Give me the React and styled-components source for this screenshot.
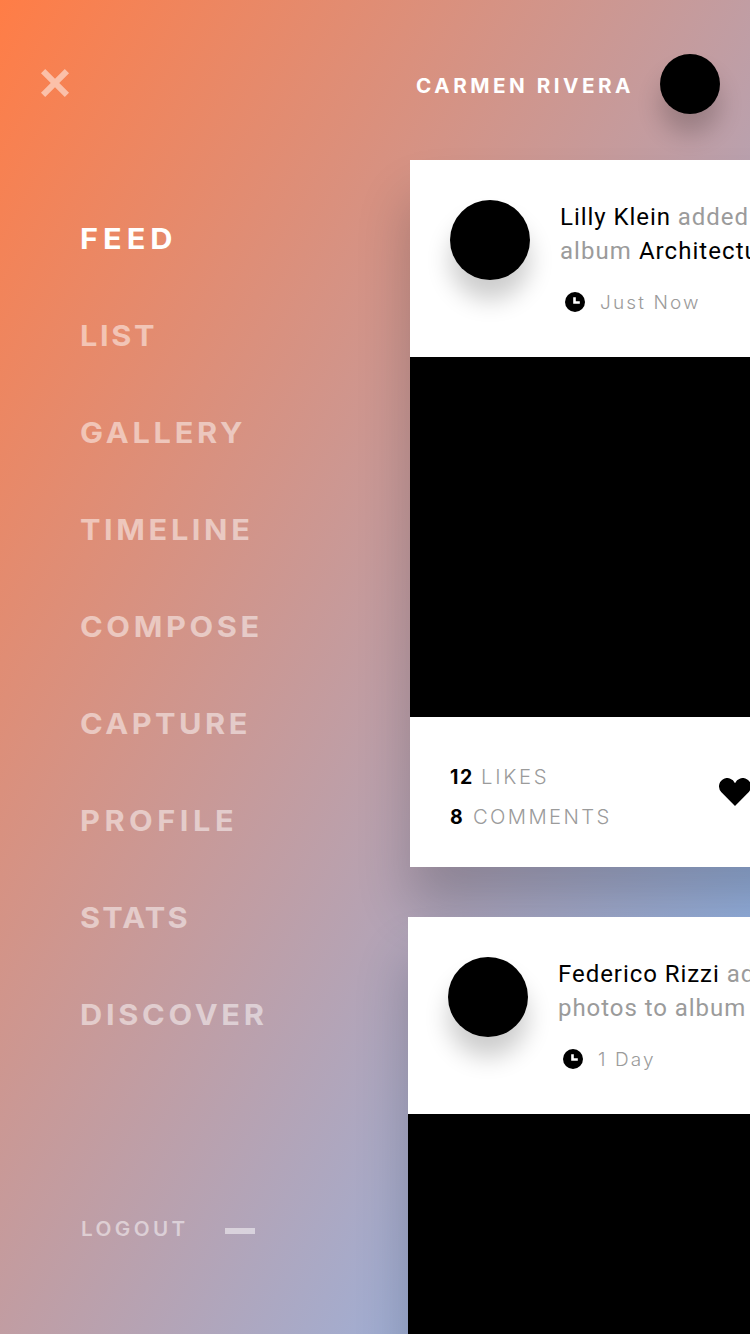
import React from 'react';
import styled, { createGlobalStyle } from 'styled-components';

const GlobalStyle = createGlobalStyle`
  *, *::before, *::after { box-sizing: border-box; }
  body { margin: 0; }
`;

const Screen = styled.div`
  width: 750px;
  height: 1334px;
  overflow: hidden;
  display: grid;
  grid-template: 160px 1174px / 408px 342px;
  background: linear-gradient(to bottom right, #ff7d46, #83bdff);
  font-family: Inter, 'Liberation Sans', sans-serif;
  color: #000;
`;

const TopBar = styled.header`
  grid-column: 1 / -1;
  display: flex;
  justify-content: space-between;
  align-items: flex-start;
  padding: 54px 30px 0 40px;
`;

const CloseButton = styled.button`
  display: block;
  margin-top: 14px;
  padding: 0;
  border: 0;
  background: none;
  line-height: 0;
`;

const User = styled.div`
  width: 304px;
  display: flex;
  align-items: center;
  justify-content: space-between;
`;

/* Wide, tracked capitals used by the navigation and the account name */
const WideText = styled.span`
  display: inline-block;
  white-space: nowrap;
  transform: scaleX(${(p) => p.$stretch || 1.06});
  transform-origin: left center;
  letter-spacing: ${(p) => p.$tracking}px;
`;

const UserName = styled(WideText)`
  margin-top: 4px;
  font-size: 19.5px;
  font-weight: 700;
  line-height: 24px;
  color: #fff;
`;

const Avatar = styled.div`
  flex: none;
  width: ${(p) => p.$size}px;
  height: ${(p) => p.$size}px;
  border-radius: 50%;
  background: #000;
  box-shadow: 0 20px 25px rgba(0, 0, 0, 0.2);
`;

const Sidebar = styled.aside`
  padding: 30px 0 0 80px;
`;

const Menu = styled.nav`
  display: flex;
  flex-direction: column;
`;

const MenuItem = styled.a`
  height: 97px;
  line-height: 97px;
  font-size: 29px;
  font-weight: 700;
  color: ${(p) => (p.$active ? '#fff' : 'rgba(255, 255, 255, 0.5)')};
`;

const Logout = styled.a`
  display: flex;
  align-items: center;
  width: 174px;
  height: 20px;
  margin: 156px 0 0 1px;
  justify-content: space-between;
  font-size: 19.5px;
  font-weight: 600;
  line-height: 20px;
  color: rgba(255, 255, 255, 0.5);
`;

const Dash = styled.i`
  width: 30px;
  height: 6px;
  margin-top: 4px;
  background: currentColor;
`;

const Feed = styled.main`
  display: flex;
  flex-direction: column;
  gap: 50px;
`;

const Card = styled.article`
  flex: none;
  width: 650px;
  margin-left: ${(p) => p.$inset || 0}px;
  background: #fff;
  box-shadow: 0 40px 50px rgba(0, 0, 0, 0.2);
`;

const CardHead = styled.div`
  display: flex;
  gap: 30px;
  height: 197px;
  padding: 40px 0 0 40px;
`;

const Line = styled.p`
  margin: 0;
  font: 400 24px/34px Roboto, 'Liberation Sans', sans-serif;
  letter-spacing: ${(p) => p.$tracking || 0.95}px;
  color: #9b9b9b;
  white-space: nowrap;

  b { font-weight: 400; color: #000; }
`;

const Time = styled.div`
  display: flex;
  align-items: center;
  gap: 14.5px;
  height: 20px;
  margin: 24px 0 0 5px;
  font-size: 18.3px;
  font-weight: 300;
  line-height: 20px;
  color: #9b9b9b;
`;

const Photo = styled.div`
  height: 360px;
  background: #000;
`;

const CardFoot = styled.div`
  display: flex;
  align-items: center;
  height: 150px;
  padding-left: 40px;
`;

const Stats = styled.div`
  width: 269px;
  padding-top: 10px;
`;

const Stat = styled.div`
  display: flex;
  height: 40px;
  line-height: 40px;
  font-size: 19.5px;
  font-weight: 300;
  color: #9b9b9b;
`;

const Count = styled.b`
  width: ${(p) => p.$width}px;
  font-weight: 700;
  letter-spacing: 1.5px;
  color: #000;
`;

const CloseIcon = () => (
  <svg width="30" height="30" viewBox="0 0 30 30">
    <path d="M3.1 3.1 26.9 26.9M26.9 3.1 3.1 26.9" stroke="#fff" strokeWidth="6" opacity="0.5" />
  </svg>
);

const ClockIcon = () => (
  <svg width="20" height="20" viewBox="0 0 20 20">
    <circle cx="10" cy="10" r="10" />
    <path d="M8.2 5.2h2.6v4.1h4v2.5H8.2z" fill="#fff" />
  </svg>
);

const HeartIcon = () => (
  <svg width="32" height="28" viewBox="0 0 32 28">
    <path d="M16 27.9 2.43 14.17A8.3 8.3 0 1 1 16 5.2 8.3 8.3 0 1 1 29.57 14.17Z" />
  </svg>
);

const MENU = [
  ['FEED', 4.7],
  ['LIST', 2.5],
  ['GALLERY', 3.5],
  ['TIMELINE', 3.4],
  ['COMPOSE', 3.4],
  ['CAPTURE', 3.25],
  ['PROFILE', 4.25],
  ['STATS', 2.1],
  ['DISCOVER', 3.5],
];

export default function App() {
  return (
    <>
      <GlobalStyle />
      <Screen>
        <TopBar>
          <CloseButton aria-label="Close"><CloseIcon /></CloseButton>
          <User>
            <UserName $tracking={3.3}>CARMEN RIVERA</UserName>
            <Avatar $size={60} />
          </User>
        </TopBar>
        <Sidebar>
          <Menu>
            {MENU.map(([label, tracking], i) => (
              <MenuItem key={label} $active={i === 0}>
                <WideText $tracking={tracking}>{label}</WideText>
              </MenuItem>
            ))}
          </Menu>
          <Logout>
            <WideText $tracking={3.2}>LOGOUT</WideText>
            <Dash />
          </Logout>
        </Sidebar>
        <Feed>
          <Card $inset={2}>
            <CardHead>
              <Avatar $size={80} />
              <div>
                <Line><b>Lilly Klein</b> added</Line>
                <Line $tracking={1.05}>album <b>Architecture</b></Line>
                <Time>
                  <ClockIcon />
                  <WideText $stretch={1.04} $tracking={2.05}>Just Now</WideText>
                </Time>
              </div>
            </CardHead>
            <Photo />
            <CardFoot>
              <Stats>
                <Stat>
                  <Count $width={31}>12</Count>
                  <WideText $stretch={1.04} $tracking={2.6}>LIKES</WideText>
                </Stat>
                <Stat>
                  <Count $width={22.5}>8</Count>
                  <WideText $stretch={1.04} $tracking={2.25}>COMMENTS</WideText>
                </Stat>
              </Stats>
              <HeartIcon />
            </CardFoot>
          </Card>
          <Card>
            <CardHead>
              <Avatar $size={80} />
              <div>
                <Line><b>Federico Rizzi</b> added</Line>
                <Line>photos to album</Line>
                <Time>
                  <ClockIcon />
                  <WideText $stretch={1.04} $tracking={2}>1 Day</WideText>
                </Time>
              </div>
            </CardHead>
            <Photo />
          </Card>
        </Feed>
      </Screen>
    </>
  );
}
